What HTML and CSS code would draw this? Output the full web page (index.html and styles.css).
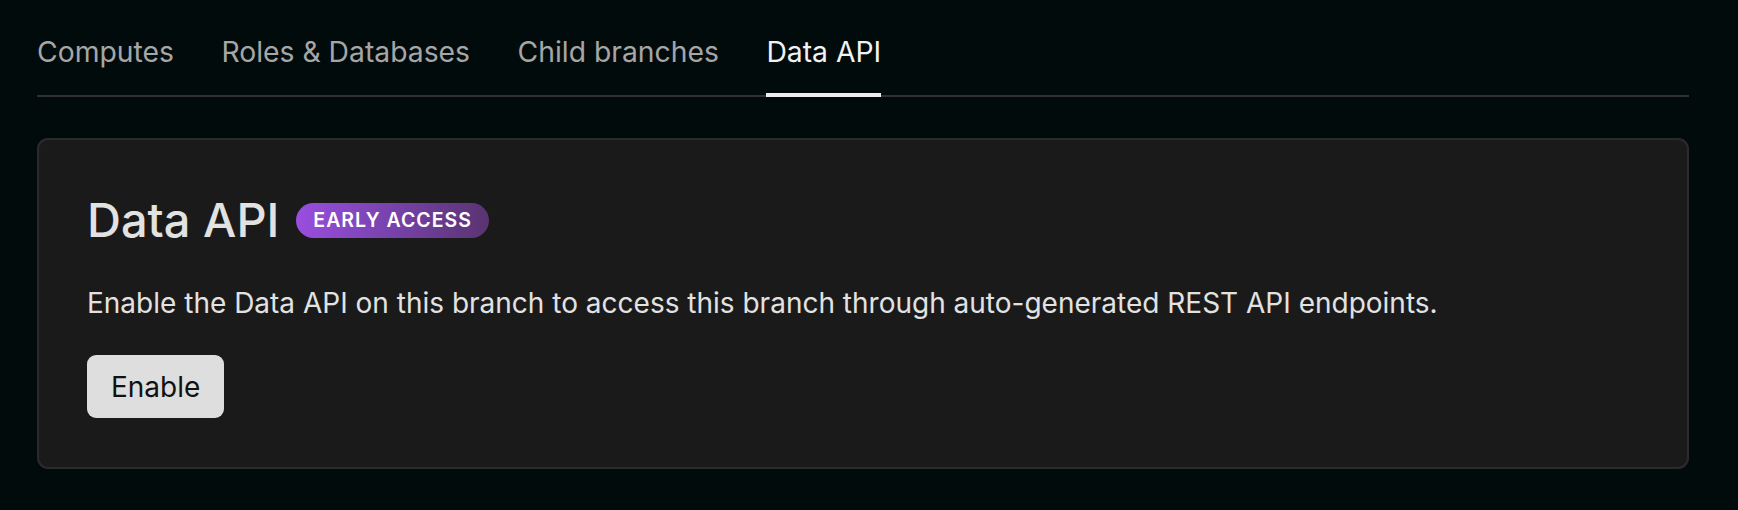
FILE: index.html
```html
<!DOCTYPE html>
<html lang="en">
<head>
<meta charset="utf-8">
<title>Data API</title>
<link rel="stylesheet" href="styles.css">
</head>
<body>
<div class="page">
  <nav class="tabs">
    <a class="tab">Computes</a>
    <a class="tab">Roles &amp; Databases</a>
    <a class="tab">Child branches</a>
    <a class="tab active">Data API</a>
  </nav>
  <section class="card">
    <div class="title-row">
      <h2 class="title">Data API</h2>
      <span class="badge">EARLY ACCESS</span>
    </div>
    <p class="desc">Enable the Data API on this branch to access this branch through auto-generated REST API endpoints.</p>
    <button class="btn">Enable</button>
  </section>
</div>
</body>
</html>
```

FILE: styles.css
```css
html, body {
  margin: 0;
  padding: 0;
  background: #020b0b;
  font-family: Inter, "Noto Sans", sans-serif;
}
.page {
  padding: 0 49px 0 37px;
}
.tabs {
  display: flex;
  gap: 47.5px;
  border-bottom: 2px solid #2f3132;
}
.tab {
  display: block;
  font-size: 28.3px;
  line-height: 34px;
  color: #a6a6a6;
  padding: 35px 0 24px;
  border-bottom: 4px solid transparent;
  margin-bottom: -2px;
}
.tab.active {
  color: #f2f2f2;
  border-bottom-color: #ececec;
}
.card {
  margin-top: 41px;
  background: #1a1a1a;
  border: 2px solid #2b2b2b;
  border-radius: 11px;
  padding: 52px 48px 49px;
}
.title-row {
  display: flex;
  align-items: center;
  gap: 17px;
}
.title {
  margin: 0;
  font-size: 47px;
  font-weight: 500;
  color: #e2e2e2;
  line-height: 56px;
}
.badge {
  display: inline-flex;
  align-items: center;
  height: 35px;
  padding: 0 17px;
  border-radius: 18px;
  background: linear-gradient(90deg, #9a4ee0 0%, #7a44b0 45%, #5a3370 100%);
  color: #fff;
  font-size: 19.5px;
  font-weight: 600;
  letter-spacing: 1px;
}
.desc {
  margin: 38px 0 35px;
  font-size: 28px;
  line-height: 34px;
  color: #e2e2e2;
}
.btn {
  display: block;
  font-family: inherit;
  font-size: 28px;
  color: #111;
  background: #dedede;
  border: 0;
  border-radius: 9px;
  height: 63px;
  padding: 0 24px;
}
```
